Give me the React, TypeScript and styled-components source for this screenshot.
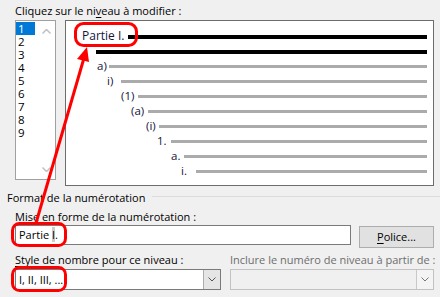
import React from 'react';
import styled, { createGlobalStyle } from 'styled-components';

const GlobalStyle = createGlobalStyle`
  html, body {
    margin: 0;
    padding: 0;
    background: #f0f0f0;
  }
  body {
    font-family: 'Open Sans', 'Noto Sans', 'Liberation Sans', sans-serif;
    font-size: 11px;
    color: #000;
  }
  u {
    text-decoration-thickness: 1px;
    text-underline-offset: 2px;
  }
`;

const Dialog = styled.div`
  position: relative;
  width: 440px;
  height: 297px;
  overflow: hidden;
  background: #f0f0f0;
`;

const Label = styled.div<{ $disabled?: boolean }>`
  line-height: 14px;
  white-space: nowrap;
  color: ${({ $disabled }) => ($disabled ? '#6d6d6d' : '#000')};
`;

const TopLabel = styled(Label)`
  padding: 4px 0 0 15px;
`;

const TopRow = styled.div`
  display: flex;
  align-items: flex-start;
  gap: 9px;
  margin: 2px 0 0 15px;
  height: 166px;
`;

const LevelList = styled.div`
  position: relative;
  width: 39px;
  height: 157px;
  background: #fff;
  border: 1px solid #a0a0a0;
  padding-top: 1px;
`;

const LevelItem = styled.div<{ $selected?: boolean }>`
  width: 19px;
  height: 13px;
  line-height: 13px;
  font-size: 11.5px;
  padding-left: 2px;
  box-sizing: border-box;
  color: ${({ $selected }) => ($selected ? '#fff' : '#000')};
  background: ${({ $selected }) => ($selected ? '#0078d7' : 'transparent')};
`;

const ScrollArrow = styled.svg<{ $bottom?: boolean }>`
  position: absolute;
  left: 26px;
  ${({ $bottom }) => ($bottom ? 'bottom: 7px;' : 'top: 8px;')}
`;

const Preview = styled.div`
  width: 361px;
  height: 156px;
  background: #fff;
  border: 1px solid #6d6d6d;
  padding: 8px 6px 0 0;
  display: flex;
  flex-direction: column;
`;

const PreviewRow = styled.div<{ $indent: number }>`
  display: flex;
  align-items: center;
  height: 15px;
  flex: none;
  padding-left: ${({ $indent }) => $indent}px;
`;

const PreviewLabel = styled.span<{ $width: number; $big?: boolean }>`
  width: ${({ $width }) => $width}px;
  flex: none;
  white-space: nowrap;
  font-size: ${({ $big }) => ($big ? 12 : 11.5)}px;
  line-height: 15px;
  color: #14143c;
  margin-top: -3px;
`;

const PreviewLine = styled.div<{ $strong?: boolean }>`
  flex: 1;
  height: ${({ $strong }) => ($strong ? 4 : 3)}px;
  background: ${({ $strong }) => ($strong ? '#000' : '#ababab')};
`;

const GroupHeader = styled.div`
  display: flex;
  align-items: center;
  margin: 5px 0 0 7px;
  line-height: 14px;
  white-space: nowrap;
`;

const GroupRule = styled.div`
  flex: 1;
  height: 1px;
  margin: -3px 0 0 7px;
  background: #dcdcdc;
`;

const FieldLabel = styled(Label)`
  margin: 5px 0 0 15px;
`;

const FieldRow = styled.div`
  display: flex;
  align-items: flex-start;
  gap: 8px;
  margin: 1px 0 0 15px;
`;

const TextBox = styled.div`
  width: 331px;
  height: 18px;
  line-height: 18px;
  background: #fff;
  border: 1px solid #7a7a7a;
  padding-left: 3px;
  white-space: nowrap;
`;

const Selected = styled.span`
  background: #cccccc;
`;

const Button = styled.div`
  width: 73px;
  height: 20px;
  margin-top: 1px;
  line-height: 20px;
  text-align: center;
  background: #e1e1e1;
  border: 1px solid #adadad;
`;

const Columns = styled.div`
  display: flex;
  gap: 9px;
  margin: 5px 0 0 15px;
`;

const Column = styled.div`
  display: flex;
  flex-direction: column;
  gap: 2px;
`;

const Select = styled.div<{ $width: number; $disabled?: boolean }>`
  display: flex;
  width: ${({ $width }) => $width}px;
  height: 19px;
  background: ${({ $disabled }) => ($disabled ? '#f0f0f0' : '#fff')};
  border: 1px solid ${({ $disabled }) => ($disabled ? '#c2c2c2' : '#7a7a7a')};
`;

const SelectValue = styled.div`
  flex: 1;
  line-height: 19px;
  padding-left: 3px;
  white-space: nowrap;
`;

const DropButton = styled.div<{ $disabled?: boolean }>`
  width: 16px;
  display: flex;
  align-items: center;
  justify-content: center;
  background: ${({ $disabled }) => ($disabled ? '#f4f4f4' : '#e5e5e5')};
  border-left: 1px solid ${({ $disabled }) => ($disabled ? '#c8c8c8' : '#adadad')};
`;

const Overlay = styled.svg`
  position: absolute;
  left: 0;
  top: 0;
  pointer-events: none;
`;

const levels = ['1', '2', '3', '4', '5', '6', '7', '8', '9'];

// x where each label starts and where its line starts, inside the preview
const previewRows = [
  { label: 'Partie I.', x: 82, line: 128, strong: true, big: true },
  { label: '', x: 96, line: 96, strong: true },
  { label: 'a)', x: 97, line: 109 },
  { label: 'i)', x: 107, line: 121 },
  { label: '(1)', x: 121, line: 138 },
  { label: '(a)', x: 131, line: 148 },
  { label: '(i)', x: 146, line: 159 },
  { label: '1.', x: 157, line: 171 },
  { label: 'a.', x: 171, line: 184 },
  { label: 'i.', x: 181, line: 196 },
];

const PREVIEW_LEFT = 66;

const Chevron = ({ color }: { color: string }) => (
  <svg width="8" height="5" viewBox="0 0 8 5">
    <polyline points="0.5,0.5 4,4 7.5,0.5" fill="none" stroke={color} strokeWidth="1" />
  </svg>
);

const Annotations = () => (
  <Overlay width="440" height="297" viewBox="0 0 440 297">
    <g fill="none" stroke="#f00" strokeWidth="3">
      <rect x="75.5" y="23.5" width="61" height="22" rx="8" />
      <rect x="12.5" y="223.5" width="53" height="22" rx="7" />
      <rect x="12.5" y="267.5" width="53" height="23" rx="7" />
      <line x1="36" y1="223" x2="84" y2="58" />
    </g>
    <polygon points="87,47 89,62 77,59" fill="#f00" />
  </Overlay>
);

export default function App() {
  return (
    <Dialog>
      <GlobalStyle />
      <TopLabel>
        Cliquez sur le ni<u>v</u>eau à modifier :
      </TopLabel>
      <TopRow>
        <LevelList>
          {levels.map(level => (
            <LevelItem key={level} $selected={level === '1'}>
              {level}
            </LevelItem>
          ))}
          <ScrollArrow width="9" height="5" viewBox="0 0 9 5">
            <polyline points="0.5,4.5 4.5,0.5 8.5,4.5" fill="none" stroke="#c0c0c0" strokeWidth="1.5" />
          </ScrollArrow>
          <ScrollArrow $bottom width="9" height="5" viewBox="0 0 9 5">
            <polyline points="0.5,0.5 4.5,4.5 8.5,0.5" fill="none" stroke="#c0c0c0" strokeWidth="1.5" />
          </ScrollArrow>
        </LevelList>
        <Preview>
          {previewRows.map((row, i) => (
            <PreviewRow key={i} $indent={row.x - PREVIEW_LEFT}>
              {row.label && (
                <PreviewLabel $width={row.line - row.x} $big={row.big}>
                  {row.label}
                </PreviewLabel>
              )}
              <PreviewLine $strong={row.strong} />
            </PreviewRow>
          ))}
        </Preview>
      </TopRow>
      <GroupHeader>
        Format de la numérotation
        <GroupRule />
      </GroupHeader>
      <FieldLabel>
        Mise en <u>f</u>orme de la numérotation :
      </FieldLabel>
      <FieldRow>
        <TextBox>
          Partie <Selected>I</Selected>.
        </TextBox>
        <Button>
          <u>P</u>olice...
        </Button>
      </FieldRow>
      <Columns>
        <Column>
          <Label>
            <u>S</u>tyle de nombre pour ce niveau :
          </Label>
          <Select $width={204}>
            <SelectValue>I, II, III, ...</SelectValue>
            <DropButton>
              <Chevron color="#555" />
            </DropButton>
          </Select>
        </Column>
        <Column>
          <Label $disabled>Inclure le numéro de niveau à partir de :</Label>
          <Select $width={202} $disabled>
            <SelectValue />
            <DropButton $disabled>
              <Chevron color="#777" />
            </DropButton>
          </Select>
        </Column>
      </Columns>
      <Annotations />
    </Dialog>
  );
}
